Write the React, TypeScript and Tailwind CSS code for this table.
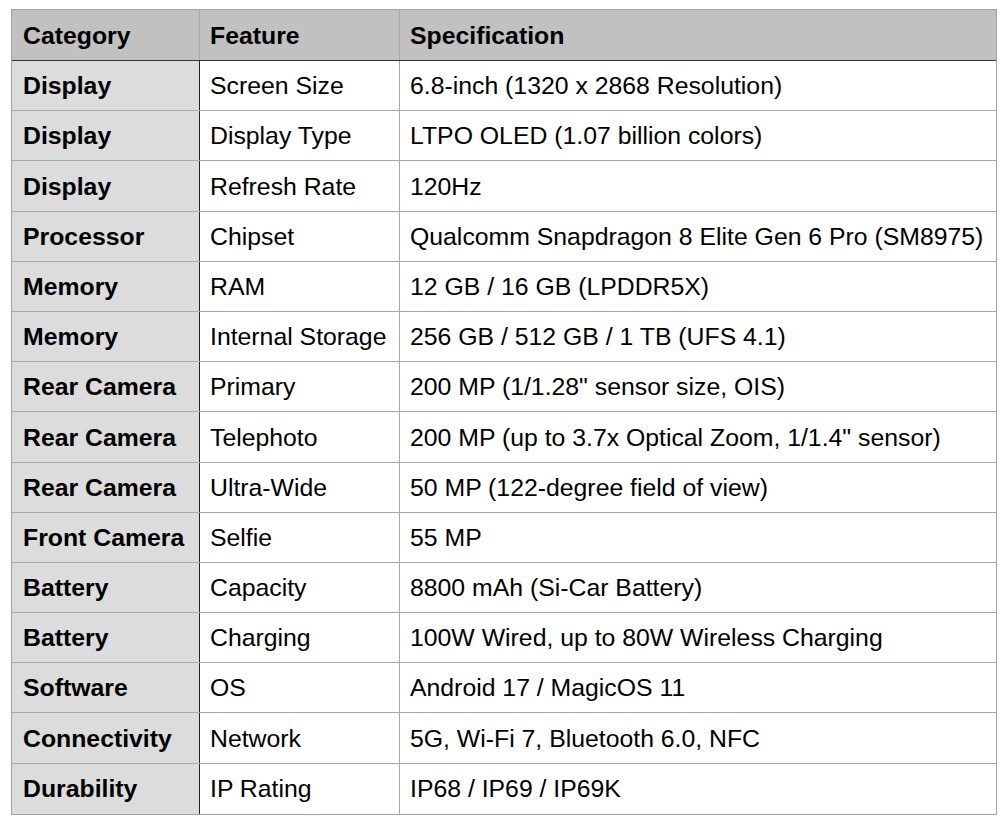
import React from "react";

const rows: [string, string, string][] = [
  ["Display", "Screen Size", "6.8-inch (1320 x 2868 Resolution)"],
  ["Display", "Display Type", "LTPO OLED (1.07 billion colors)"],
  ["Display", "Refresh Rate", "120Hz"],
  ["Processor", "Chipset", "Qualcomm Snapdragon 8 Elite Gen 6 Pro (SM8975)"],
  ["Memory", "RAM", "12 GB / 16 GB (LPDDR5X)"],
  ["Memory", "Internal Storage", "256 GB / 512 GB / 1 TB (UFS 4.1)"],
  ["Rear Camera", "Primary", "200 MP (1/1.28\" sensor size, OIS)"],
  ["Rear Camera", "Telephoto", "200 MP (up to 3.7x Optical Zoom, 1/1.4\" sensor)"],
  ["Rear Camera", "Ultra-Wide", "50 MP (122-degree field of view)"],
  ["Front Camera", "Selfie", "55 MP"],
  ["Battery", "Capacity", "8800 mAh (Si-Car Battery)"],
  ["Battery", "Charging", "100W Wired, up to 80W Wireless Charging"],
  ["Software", "OS", "Android 17 / MagicOS 11"],
  ["Connectivity", "Network", "5G, Wi-Fi 7, Bluetooth 6.0, NFC"],
  ["Durability", "IP Rating", "IP68 / IP69 / IP69K"],
];

export default function App() {
  return (
    <div
      className="w-[1008px] h-[826px] bg-white pt-[9px] pl-[11px] text-black"
      style={{ fontFamily: '"Liberation Sans", Arial, Helvetica, sans-serif' }}
    >
      <div className="w-[986px] border border-[#a3a3a3] text-[24.8px] leading-none">
        <div className="flex h-[51px] bg-[#c0c1c0] border-b border-[#333333] font-bold">
          <div className="w-[188px] pl-[11px] pt-[2px] flex items-center border-r border-[#a8a8a8]">Category</div>
          <div className="w-[200px] pl-[10px] pt-[2px] flex items-center border-r border-[#a8a8a8]">Feature</div>
          <div className="flex-1 pl-[10px] pt-[2px] flex items-center">Specification</div>
        </div>
        {rows.map((r, i) => (
          <div
            key={i}
            className={
              "flex h-[50.2px] " + (i < rows.length - 1 ? "border-b border-[#a8a8a8]" : "")
            }
          >
            <div className="w-[188px] pl-[11px] pt-[2px] flex items-center bg-[#dcdcdc] font-bold border-r border-[#222222] whitespace-nowrap">
              {r[0]}
            </div>
            <div className="w-[200px] pl-[10px] pt-[2px] flex items-center border-r border-[#a8a8a8] whitespace-nowrap">{r[1]}</div>
            <div className="flex-1 pl-[10px] pt-[2px] flex items-center whitespace-nowrap">{r[2]}</div>
          </div>
        ))}
      </div>
    </div>
  );
}
